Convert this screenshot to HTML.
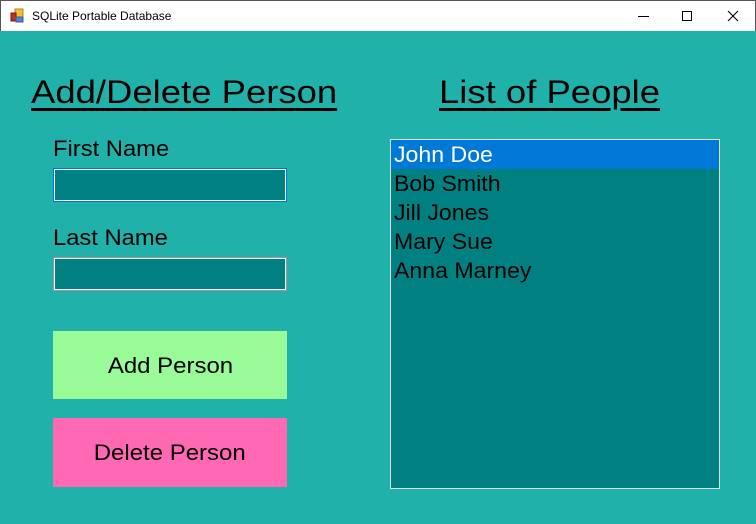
<!DOCTYPE html>
<html><head><meta charset="utf-8"><style>
*{margin:0;padding:0;box-sizing:border-box}
body{width:756px;height:524px;overflow:hidden;background:#20B2AA;font-family:"Liberation Sans",Arial,sans-serif;position:relative}
.tb{position:absolute;left:0;top:0;width:756px;height:31px;background:#fff;border:1px solid #555;border-bottom:none}
.t{position:absolute;left:31px;top:8px;font-size:12px;color:#000}
.a{position:absolute;color:#000;white-space:nowrap;transform-origin:0 0}
.h{font-size:32px;text-decoration:underline;text-decoration-thickness:3px;text-underline-offset:5px;transform:scaleX(1.14)}
.l{font-size:22px;transform:scaleX(1.08)}
.in{position:absolute;left:53px;width:234px;height:34px;background:#008080;border:1px solid #fff}
.btn{position:absolute;left:53px;width:234px;font-size:22px;display:flex;align-items:center;justify-content:center;color:#000}
.btn span{display:inline-block;transform:scaleX(1.09)}
.lb{position:absolute;left:390px;top:139px;width:330px;height:350px;background:#008080;border:1px solid #ddd}
.it{position:absolute;left:3px;font-size:22px;color:#000;height:29px;line-height:29px;width:327px}
.it span{display:inline-block;transform:scaleX(1.05);transform-origin:0 0}
</style></head><body>
<div class="tb">
<svg style="position:absolute;left:9px;top:7px" width="15" height="15" viewBox="0 0 15 15"><rect x="5" y="1" width="8" height="8" fill="#f0c030" stroke="#b08020"/><rect x="1" y="5" width="5" height="8" fill="#c03020" stroke="#801010"/><rect x="6" y="9" width="7" height="5" fill="#5080d0" stroke="#3060a0"/></svg>
<div class="t">SQLite Portable Database</div>
<div style="position:absolute;left:637px;top:15px;width:11px;height:1px;background:#000"></div>
<div style="position:absolute;left:681px;top:10px;width:10px;height:10px;border:1px solid #000"></div>
<svg style="position:absolute;left:726px;top:9px" width="12" height="12"><path d="M1 1L11 11M11 1L1 11" stroke="#000" stroke-width="1.1"/></svg>
</div>
<div class="a h" style="left:31px;top:74px">Add/Delete Person</div>
<div class="a h" style="left:439px;top:74px">List of People</div>
<div class="a l" style="left:53px;top:136px">First Name</div>
<div class="in" style="top:168px;border-color:#0078D7;box-shadow:inset 0 0 0 1px #fff"></div>
<div class="a l" style="left:53px;top:225px">Last Name</div>
<div class="in" style="top:257px;border-color:#999;box-shadow:inset 0 0 0 1px #fff"></div>
<div class="btn" style="top:331px;height:68px;background:#98FB98"><span style="margin-top:2px">Add Person</span></div>
<div class="btn" style="top:418px;height:69px;background:#FF69B4"><span>Delete Person</span></div>
<div class="lb">
<div class="it" style="left:0;top:0;padding-left:3px;background:#0078D7;color:#fff"><span>John Doe</span></div>
<div class="it" style="top:29px"><span>Bob Smith</span></div>
<div class="it" style="top:58px"><span>Jill Jones</span></div>
<div class="it" style="top:87px"><span>Mary Sue</span></div>
<div class="it" style="top:116px"><span>Anna Marney</span></div>
</div>
</body></html>
